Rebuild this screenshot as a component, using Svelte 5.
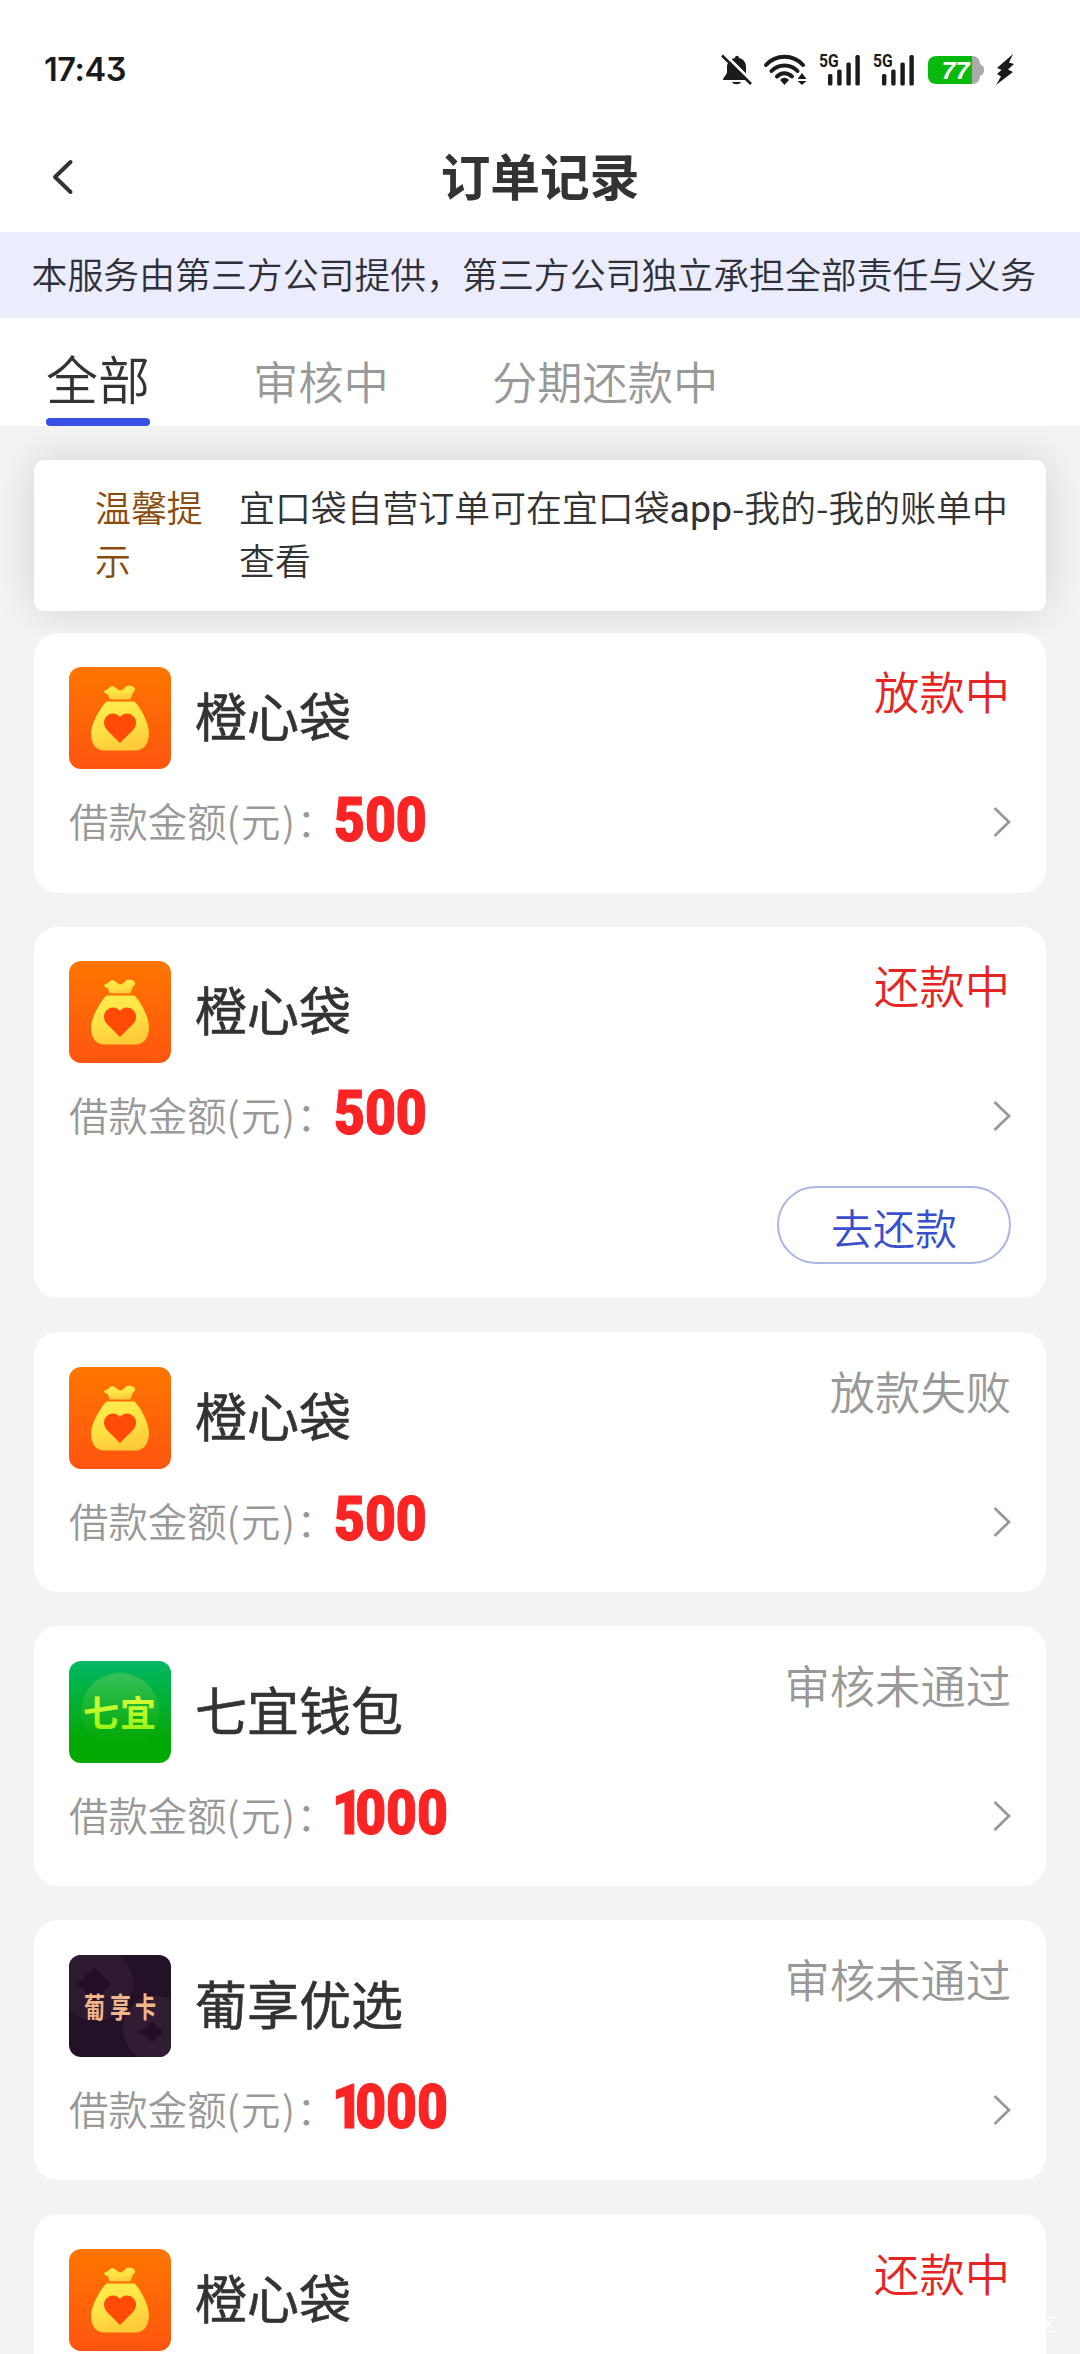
<script lang="ts">
  type Order = {
    logo: 'bag' | 'qiyi' | 'puxiang';
    name: string;
    status: string;
    active: boolean;
    amount: number;
    action?: string;
  };

  const tabs = ['全部', '审核中', '分期还款中'];
  let current = $state(0);

  const orders: Order[] = [
    { logo: 'bag', name: '橙心袋', status: '放款中', active: true, amount: 500 },
    { logo: 'bag', name: '橙心袋', status: '还款中', active: true, amount: 500, action: '去还款' },
    { logo: 'bag', name: '橙心袋', status: '放款失败', active: false, amount: 500 },
    { logo: 'qiyi', name: '七宜钱包', status: '审核未通过', active: false, amount: 1000 },
    { logo: 'puxiang', name: '葡享优选', status: '审核未通过', active: false, amount: 1000 },
    { logo: 'bag', name: '橙心袋', status: '还款中', active: true, amount: 500 },
  ];
</script>

{#snippet signal()}
  <div class="signal">
    <span class="net">5G</span>
    <svg width="42" height="32" viewBox="0 0 42 32">
      <g fill="#1b1b1b">
        <rect x="9" y="20" width="4.4" height="11.5" rx="1.6" />
        <rect x="18.2" y="15.5" width="4.4" height="16" rx="1.6" />
        <rect x="27.4" y="8.5" width="4.4" height="23" rx="1.6" />
        <rect x="36.4" y="1" width="4.4" height="30.5" rx="1.6" />
      </g>
    </svg>
  </div>
{/snippet}

{#snippet logoArt(kind: Order['logo'])}
  {#if kind === 'bag'}
    <svg class="logo" viewBox="0 0 102 102">
      <defs>
        <linearGradient id="orange" x1="0" y1="0" x2="0" y2="1">
          <stop offset="0" stop-color="#ff7600" />
          <stop offset="1" stop-color="#ff5510" />
        </linearGradient>
        <linearGradient id="gold" x1="0" y1="0" x2="0.3" y2="1">
          <stop offset="0" stop-color="#ffee4e" />
          <stop offset="0.6" stop-color="#ffe244" />
          <stop offset="1" stop-color="#ffcb3a" />
        </linearGradient>
      </defs>
      <rect width="102" height="102" fill="url(#orange)" />
      <path fill="url(#gold)" d="M35 24c1-1 3-1 4-2 2-3 5-4 8-1 2 2 4 3 6 2 2-1 3-3 5-4 4-1 8 1 8 3 1 1-2 3-3 6l-1 3q-.5 1.500-2 1.500H42q-1.500 0-2-1.500l-1-3.500c-1-1-3-1-4-3Z" />
      <path fill="url(#gold)" d="M38 34.500h27c2 0 14 17 15 31 0 10-4 18-14 18H36c-10 0-14-7-14-18 1-13 14-31 16-31Z" />
      <path fill="#ff4b05" d="M51 76 38 63c-4-4-4-11 0-14 4-4 10-3 13 1 3-4 9-5 13-1 4 3 4 10 0 14Z" />
    </svg>
  {:else if kind === 'qiyi'}
    <svg class="logo" viewBox="0 0 102 102">
      <defs>
        <linearGradient id="green" x1="0" y1="0" x2="0" y2="1">
          <stop offset="0" stop-color="#02b865" />
          <stop offset="0.75" stop-color="#02a906" />
          <stop offset="1" stop-color="#02a900" />
        </linearGradient>
        <linearGradient id="gloss" x1="0" y1="0" x2="0" y2="1">
          <stop offset="0" stop-color="#36c158" />
          <stop offset="0.6" stop-color="#28b521" stop-opacity="0.4" />
          <stop offset="1" stop-color="#02a906" stop-opacity="0" />
        </linearGradient>
        <linearGradient id="lime" x1="0" y1="0" x2="0" y2="1">
          <stop offset="0" stop-color="#f0ff44" />
          <stop offset="1" stop-color="#8cf210" />
        </linearGradient>
      </defs>
      <rect width="102" height="102" fill="url(#green)" />
      <circle cx="51" cy="51" r="39" fill="url(#gloss)" />
      <text class="art" x="14 51" y="66" font-size="36" fill="url(#lime)">七宜</text>
    </svg>
  {:else}
    <svg class="logo" viewBox="0 0 102 102">
      <rect width="102" height="102" fill="#231127" />
      <circle cx="27" cy="29" r="37" fill="#2d1a31" />
      <path d="m25 12 17 17-17 17L8 29Z" fill="#220f27" />
      <circle cx="87" cy="74" r="33" fill="#301d34" />
      <path d="m83 67 12 10-12 10-13-10Z" fill="#220f27" />
      <g transform="scale(1 1.36)">
        <text class="art" x="15 41 66" y="46" font-size="21" fill="#f1b68c">葡享卡</text>
      </g>
    </svg>
  {/if}
{/snippet}

<div class="screen">
  <header class="statusbar">
    <time>17:43</time>
    <div class="indicators">
      <svg class="bell" width="32" height="32" viewBox="0 0 32 32">
        <path fill="#1b1b1b" d="M14 4c0-3 4-3 4 0 5 1 7 5 7 9v6c0 2 4 4 4 7H2c0-3 4-5 4-8v-5c0-4 3-8 8-9ZM11 28h9c-1 3-8 3-9 0Z" />
        <path stroke="#fff" stroke-width="3" d="m4 .5 28 28" />
        <path stroke="#1b1b1b" stroke-width="2.600" d="m1 1.500 29 28.500" />
      </svg>
      <svg class="wifi" width="44" height="32" viewBox="0 0 44 32">
        <g fill="none" stroke="#1b1b1b" stroke-width="4" stroke-linecap="round">
          <path d="M3 11c10-11 27-11 37 0" />
          <path d="M8.500 17c7-7.500 19-7.500 26 0" />
          <path d="M14 22.500c4-4 10-4.500 15 0" />
        </g>
        <path fill="#1b1b1b" d="M21.500 31 17 26c3-3 6-3 9 0ZM39 19l4.500 6h-9ZM39 31l-4.500-4h9Z" />
      </svg>
      {@render signal()}
      {@render signal()}
      <svg class="battery" width="56" height="28" viewBox="0 0 56 28">
        <path fill="#aaa" d="M8 0h36c5 0 8 3 8 8 3 1 4 3 4 6s-1 5-4 6c0 5-3 8-8 8H8Z" />
        <path fill="#08b90e" d="M9 0h35v28H9c-6 0-9-3-9-8V8c0-5 3-8 9-8Z" />
        <text class="level" x="13.500" y="22.500" textLength="28" lengthAdjust="spacingAndGlyphs">77</text>
      </svg>
      <svg class="bolt" width="20" height="32" viewBox="0 0 20 32">
        <path fill="#1b1b1b" d="M18 0 2 14l4.500 2L2 20l4 2.500L1 31l17-13-5-2.500 6-5.500-5-1.500Z" />
      </svg>
    </div>
  </header>

  <nav class="titlebar">
    <svg class="back" width="22" height="38" viewBox="0 0 22 38">
      <path fill="none" stroke="#333" stroke-width="4" stroke-linecap="round" stroke-linejoin="round" d="M18.500 4 3 19l15.500 15" />
    </svg>
    <h1>订单记录</h1>
  </nav>

  <p class="disclaimer">本服务由第三方公司提供，第三方公司独立承担全部责任与义务</p>

  <div class="tabs">
    {#each tabs as tab, i}
      <button class="tab" class:selected={i === current} onclick={() => (current = i)}>{tab}</button>
    {/each}
  </div>

  <main>
    <section class="notice">
      <span class="hint">温馨提示</span>
      <span class="message">宜口袋自营订单可在宜口袋<span class="latin">app</span>-我的-我的账单中查看</span>
    </section>

    {#each orders as order}
      <article class="card">
        <div class="head">
          {@render logoArt(order.logo)}
          <h2>{order.name}</h2>
          <span class="status" class:active={order.active}>{order.status}</span>
        </div>
        <div class="loan">
          <span class="label">借款金额<span class="unit">(元)</span>：</span>
          <strong class:thousands={order.amount >= 1000}>{order.amount}</strong>
          <svg class="more" width="20" height="34" viewBox="0 0 20 34">
            <path fill="none" stroke="#999" stroke-width="2.800" d="m3.500 3 14.500 14L3.500 31" />
          </svg>
        </div>
        {#if order.action}
          <button class="action">{order.action}</button>
        {/if}
      </article>
    {/each}
  </main>
  <span class="watermark">区</span>
</div>

<style>
  :global(body) {
    background: #f3f3f3;
  }
  .screen {
    position: relative;
    display: flex;
    flex-direction: column;
    width: 1080px;
    height: 2354px;
    overflow: hidden;
    background: #f3f3f3;
    color: #333;
    font-family: 'Noto Sans CJK SC', sans-serif;
    font-weight: 350;
  }
  button {
    padding: 0;
    border: 0;
    background: none;
    font: inherit;
    color: inherit;
  }
  .statusbar {
    display: flex;
    flex: none;
    align-items: center;
    justify-content: space-between;
    box-sizing: border-box;
    height: 139px;
    padding: 0 65px 0 44px;
    background: #fff;
  }
  time {
    font: 600 32.500px/40px Inter, sans-serif;
    font-feature-settings: 'cv09';
    letter-spacing: -0.4px;
    color: #1b1b1b;
  }
  .indicators {
    display: flex;
    align-items: center;
  }
  .wifi {
    margin-left: 10px;
  }
  .signal {
    position: relative;
    height: 32px;
    margin-left: 12px;
  }
  .battery {
    margin-left: 13px;
  }
  .bolt {
    margin-left: 11px;
  }
  .net {
    position: absolute;
    top: -3px;
    left: 0;
    color: #1b1b1b;
    font: 700 18px/20px Roboto, sans-serif;
    transform: scaleX(0.87);
    transform-origin: left;
  }
  .level {
    font: italic 700 23px 'Liberation Sans', sans-serif;
    fill: #fff;
  }
  .titlebar {
    display: grid;
    flex: none;
    grid-template-columns: 1fr auto 1fr;
    align-items: center;
    box-sizing: border-box;
    height: 93px;
    padding: 0 52px 17px;
    background: #fff;
  }
  h1 {
    margin: -6px 0 0;
    font-size: 49.7px;
    font-weight: 700;
    line-height: 60px;
  }
  .disclaimer {
    flex: none;
    margin: 0;
    padding-left: 31.500px;
    height: 86px;
    background: #ebedfd;
    color: #2f303a;
    font-size: 35.88px;
    line-height: 82px;
    white-space: nowrap;
  }
  .tabs {
    position: relative;
    z-index: 1;
    display: flex;
    flex: none;
    gap: 103px;
    height: 108px;
    padding-left: 46px;
    background: #fff;
  }
  .tab {
    box-sizing: border-box;
    height: 108px;
    font-size: 45.300px;
    line-height: 124px;
    color: #999;
  }
  .tab.selected {
    display: flex;
    flex-direction: column;
    justify-content: space-between;
    font-size: 52px;
    line-height: 119px;
    color: #333;
  }
  .tab.selected::after {
    content: '';
    flex: none;
    height: 8px;
    margin-top: -23px;
    border-radius: 4px;
    background: #3750e6;
  }
  main {
    display: flex;
    flex-direction: column;
    padding: 34px 34px 0;
  }
  .notice {
    display: flex;
    flex: none;
    box-sizing: border-box;
    height: 151px;
    margin-bottom: 21.700px;
    padding: 20px 34px 0 61px;
    border-radius: 10px;
    background: #fff;
    box-shadow: 0 0 42px rgba(0, 0, 0, 0.13);
    font-size: 35.88px;
    line-height: 53px;
  }
  .hint {
    flex: none;
    width: 110px;
    margin-right: 34px;
    color: #8a4b0c;
  }
  .message {
    flex: 1;
    min-width: 0;
  }
  .latin {
    font-family: Roboto, sans-serif;
    font-weight: 400;
    font-size: 37.500px;
    line-height: 1;
  }
  .card {
    position: relative;
    display: flex;
    flex: none;
    flex-direction: column;
    box-sizing: border-box;
    margin-bottom: 34px;
    padding: 34.400px 35px 17.500px;
    border-radius: 24px;
    background: #fff;
  }
  .card:has(.action) {
    padding-bottom: 34px;
  }
  .head {
    display: flex;
    height: 102px;
  }
  .logo {
    flex: none;
    width: 102px;
    height: 102px;
    border-radius: 12px;
  }
  .art {
    font-family: 'Noto Sans CJK SC', sans-serif;
    font-weight: 700;
  }
  h2 {
    margin: 0 auto 0 24px;
    font-size: 52px;
    font-weight: 400;
    line-height: 96px;
    -webkit-text-stroke: 0.600px #333;
  }
  .status {
    font-size: 45.300px;
    line-height: 47px;
    color: #999;
  }
  .status.active {
    margin-right: 1px;
    color: #e52424;
  }
  .loan {
    display: flex;
    align-items: center;
    height: 106px;
  }
  .label {
    width: 265px;
    margin-top: -5px;
    color: #999;
    font-size: 39.400px;
    white-space: nowrap;
  }
  .unit {
    letter-spacing: 1.5px;
  }
  strong {
    margin-top: -5px;
    margin-right: auto;
    transform: scaleX(0.86);
    transform-origin: left;
    color: #fa2424;
    font: 900 62px/64px Roboto, sans-serif;
    -webkit-text-stroke: 1.200px #fa2424;
  }
  strong.thousands {
    margin-left: -2px;
  }
  strong.thousands::first-letter {
    letter-spacing: -9px;
  }
  .action {
    align-self: flex-end;
    box-sizing: border-box;
    width: 234px;
    height: 78px;
    margin-top: 17.500px;
    border: 2px solid #aab6e4;
    border-radius: 39px;
    color: #3950cc;
    font-size: 42px;
    line-height: 77px;
  }
  .watermark {
    position: absolute;
    right: 23px;
    bottom: 18px;
    color: #fff;
    font-size: 17px;
    line-height: 24px;
  }
</style>
